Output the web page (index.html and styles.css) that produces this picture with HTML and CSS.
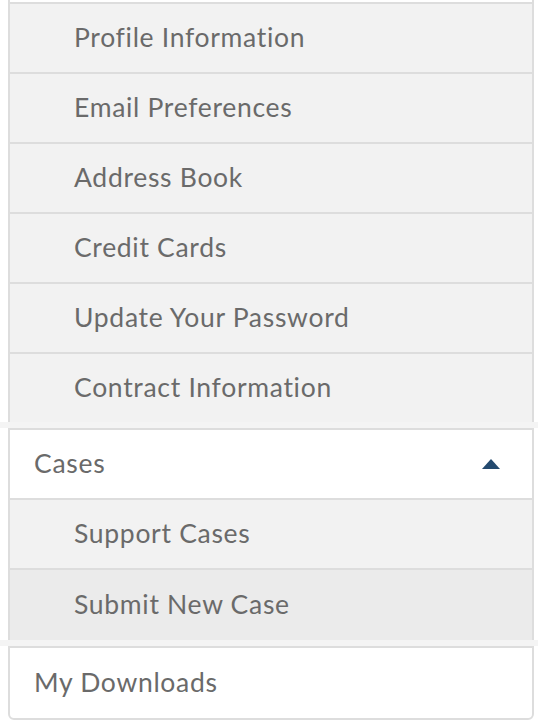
FILE: index.html
```html
<!DOCTYPE html>
<html lang="en">
<head>
<meta charset="utf-8">
<title>Account menu</title>
<link rel="stylesheet" href="styles.css">
</head>
<body>
<nav class="menu">
  <div class="group">
    <div class="head head-tail"></div>
    <ul class="sub">
      <li class="row">Profile Information</li>
      <li class="row">Email Preferences</li>
      <li class="row">Address Book</li>
      <li class="row">Credit Cards</li>
      <li class="row">Update Your Password</li>
      <li class="row">Contract Information</li>
    </ul>
  </div>
  <div class="sep"></div>
  <div class="group">
    <div class="head">
      <span>Cases</span>
      <svg class="caret" width="18" height="10" viewBox="0 0 18 10"><path d="M0 10 L9 0 L18 10 Z" fill="#244a6f"/></svg>
    </div>
    <ul class="sub">
      <li class="row">Support Cases</li>
      <li class="row active">Submit New Case</li>
    </ul>
  </div>
  <div class="sep"></div>
  <div class="group single">
    <div class="head"><span>My Downloads</span></div>
  </div>
</nav>
</body>
</html>
```
FILE: styles.css
```css
* { box-sizing: border-box; }
html, body { margin: 0; padding: 0; background: #fff; }
body {
  font-family: Lato, "Noto Sans", "Liberation Sans", sans-serif;
  color: #6a6a6a;
}
.menu { width: 538px; }
.group {
  margin-left: 8px;
  width: 526px;
  border: 2px solid #ddd;
  border-bottom: 0;
  background: #fff;
}
.head {
  height: 70px;
  border-bottom: 2px solid #ddd;
  display: flex;
  align-items: center;
  justify-content: space-between;
  padding: 0 32px 2px 24px;
  font-size: 26.5px;
  letter-spacing: 0.7px;
  background: #fff;
}
.head-tail { height: 4px; padding: 0; }
.group:first-child { border-top: 0; }
.sub { list-style: none; margin: 0; padding: 0; background: #f2f2f2; }
.row {
  height: 70px;
  border-bottom: 2px solid #ddd;
  padding: 0 0 2px 64px;
  display: flex;
  align-items: center;
  font-size: 26.5px;
  letter-spacing: 0.7px;
}
.row:last-child { border-bottom: 0; height: 68px; }
.row.active { background: #ebebeb; height: 70px; }
.sep { height: 6px; background: #f4f4f4; }
.single { border-bottom: 2px solid #ddd; border-radius: 0 0 6px 6px; }
.single .head { border-bottom: 0; height: 70px; border-radius: 0 0 6px 6px; }
.caret { display: block; margin-top: 2px; }
```
